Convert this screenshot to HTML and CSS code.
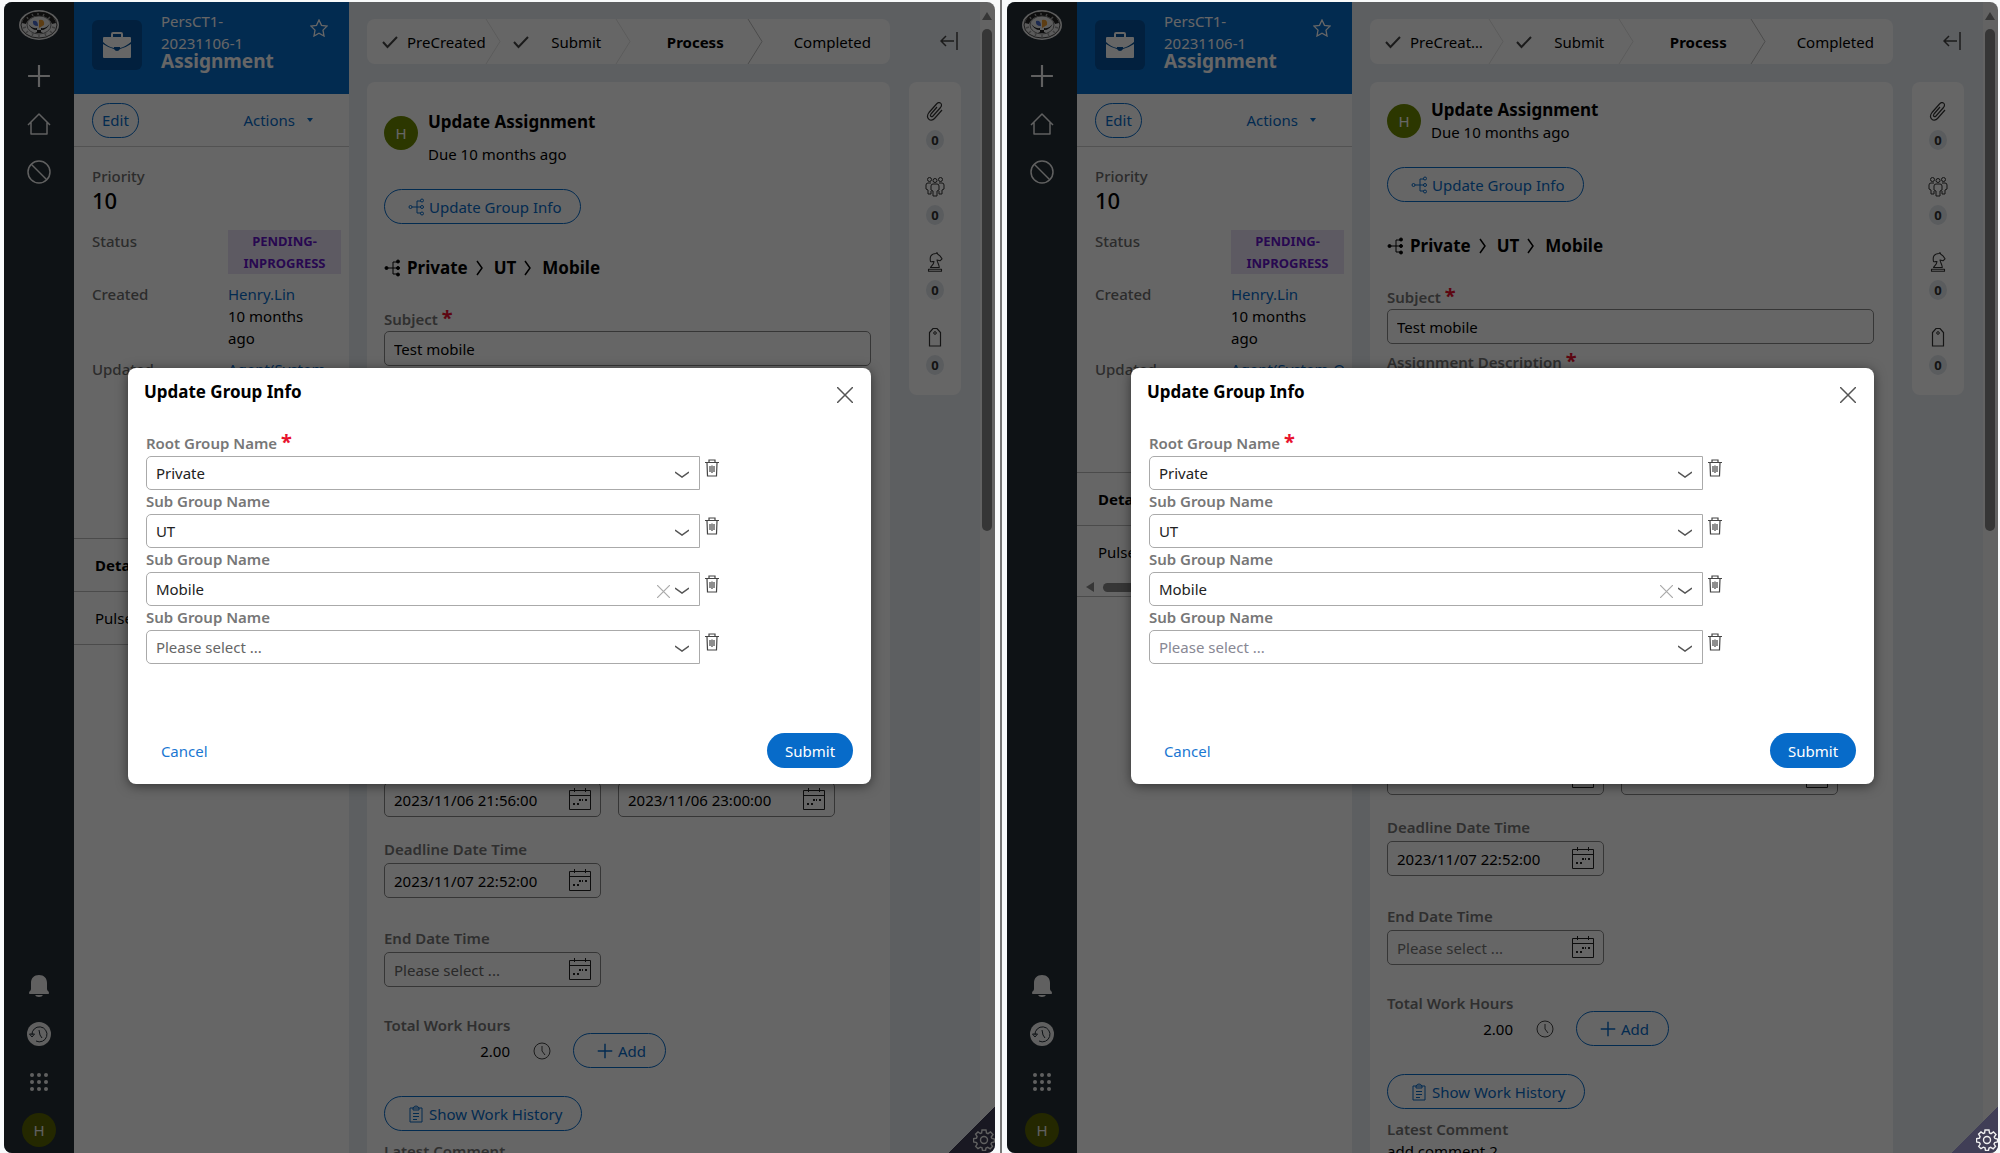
FILE: index.html
```html
<!DOCTYPE html>
<html lang="en">
<head>
    <meta charset="UTF-8">
    <title>Assignment - Update Group Info</title>
    <link rel="stylesheet" href="styles.css">
</head>
<body>
    <!-- Icon set, used by both screens -->
    <svg class="icon-set" aria-hidden="true">
        <symbol id="i-logo" viewBox="0 0 40 30">
            <ellipse cx="20" cy="15" rx="20" ry="15" fill="#e4e4e4"/>
            <ellipse cx="20" cy="15" rx="18" ry="13" fill="none" stroke="#444" stroke-width="1"/>
            <path d="M3 13C5 5 12 2 20 2s15 3 17 11l-4 1C31 9 27 6 20 6S9 9 7 14z" fill="#222"/>
            <path d="M8 7l1 2M13 4l1 2M19 3v2M25 4l-1 2M31 7l-2 2M4 18l3-1M7 23l2-2M13 26l1-2M20 27v-2M27 26l-1-2M33 23l-2-2M36 18l-3-1" stroke="#999" stroke-width="1.5"/>
            <ellipse cx="20" cy="15" rx="12" ry="9" fill="#e8e8e8" stroke="#777"/>
            <path d="M14 11q5 -1 5 5q-6 0 -5 -5z" fill="#4a69c9"/>
            <path d="M20 10q6 -1 5 5l-5 3z" fill="#e89a30"/>
            <path d="M9 13q3 6 9 5v4q-3 2-6 1h16q-3 1-6-1v-4q6 1 9-5q-3 8-11 7q-8 1-11-7z" fill="#222"/>
        </symbol>
        <symbol id="i-plus" viewBox="0 0 22 22"><path d="M11 1v20M1 11h20" stroke="currentColor" stroke-width="2" fill="none"/></symbol>
        <symbol id="i-home" viewBox="0 0 24 24"><path d="M1 13L12 2l11 11M4 10v12h16V10" stroke="currentColor" stroke-width="1.5" fill="none" stroke-linejoin="round"/></symbol>
        <symbol id="i-ban" viewBox="0 0 24 24"><circle cx="12" cy="12" r="11" stroke="currentColor" stroke-width="1.5" fill="none"/><path d="M4 4l16 16" stroke="currentColor" stroke-width="1.5"/></symbol>
        <symbol id="i-bell" viewBox="0 0 22 24"><path d="M11 1c-5 0-8 3-8 8v6c0 2-2 2-2 4 0 1 1 1 1 1h18s1 0 1-1c0-2-2-2-2-4V9c0-5-3-8-8-8zM7 21h8q-1 2-4 2t-4-2z" fill="currentColor"/></symbol>
        <symbol id="i-history" viewBox="0 0 24 24"><circle cx="12" cy="12" r="12" fill="currentColor"/><path d="M5 13a7.500 7.500 0 1 1 4 6M2.500 12l2.500 3 2.500-3zM12 8l1 5 2 3" stroke="#232d35" fill="none" stroke-width="1"/></symbol>
        <symbol id="i-grid" viewBox="0 0 18 18"><g fill="currentColor"><circle cx="2" cy="2" r="2"/><circle cx="9" cy="2" r="2"/><circle cx="16" cy="2" r="2"/><circle cx="2" cy="9" r="2"/><circle cx="9" cy="9" r="2"/><circle cx="16" cy="9" r="2"/><circle cx="2" cy="16" r="2"/><circle cx="9" cy="16" r="2"/><circle cx="16" cy="16" r="2"/></g></symbol>
        <symbol id="i-case" viewBox="0 0 28 26"><path d="M8 5V2q0-2 2-2h8q2 0 2 2v3h-2V2h-8v3z" fill="currentColor"/><path d="M1 5h26q1 0 1 1v4q-6 5-11 6v-1h-6v1Q5 15 0 10V6q0-1 1-1zM0 12q6 4 11 5 1 2 3 2t3-2q5-1 11-5v13q0 1-1 1H1q-1 0-1-1z" fill="currentColor"/></symbol>
        <symbol id="i-star" viewBox="0 0 18 18"><path d="M9 1l2.500 5.300 5.500.8-4 4 1 5.900-5-2.800L4 17l1-5.900-4-4 5.500-.8z" stroke="currentColor" fill="none" stroke-width="1.300"/></symbol>
        <symbol id="i-check" viewBox="0 0 16 14"><path d="M1 7l4.500 5L15 2" stroke="currentColor" fill="none" stroke-width="2"/></symbol>
        <symbol id="i-collapse" viewBox="0 0 18 18"><path d="M17 0v18M14 9H1M6 4L1 9l5 5" stroke="currentColor" fill="none" stroke-width="1.500"/></symbol>
        <symbol id="i-tree" viewBox="0 0 16 18"><path d="M4 9h9M13 3H9v12h4" stroke="currentColor" fill="none"/><g stroke="currentColor"><circle cx="2.500" cy="9" r="1.500"/><circle cx="14" cy="2.500" r="1.500"/><circle cx="14" cy="9" r="1.500"/><circle cx="14" cy="15.500" r="1.500"/></g></symbol>
        <symbol id="i-next" viewBox="0 0 8 16"><path d="M1 1l5 7-5 7" stroke="currentColor" fill="none" stroke-width="1.500"/></symbol>
        <symbol id="i-clip" viewBox="0 0 18 20"><path d="M11 5l-6 7c-1.500 2 .5 3.500 2 2l7.500-8.500c3-4-1.500-6.500-4-3.500L3 10.500c-4 5 1.500 10.500 5.500 6l7.500-8.500" stroke="currentColor" fill="none" stroke-width="1.200"/></symbol>
        <symbol id="i-people" viewBox="0 0 20 20"><g stroke="currentColor" fill="none"><circle cx="4.500" cy="2.500" r="2"/><circle cx="15.500" cy="2.500" r="2"/><circle cx="10" cy="3.500" r="2"/><path d="M6 6H3Q1 6 1 8v4l2 1v4h3v-3M14 6h3q2 0 2 2v4l-2 1v4h-3v-3M8 7h4q2 0 2 2v4l-2 1v5H8v-5l-2-1V9q0-2 2-2z"/></g></symbol>
        <symbol id="i-knight" viewBox="0 0 16 20"><path d="M3.500 15.500c1-1.500 3.500-3.500 3.500-6-1.500 0-2.500.5-3.500 0C2.500 5 4 1.500 9 1.500L10 .7l.8 1.500C12.500 3 14 5 15 6.800L13 8.800 10 8c.5 3 2 4 2.300 7.500zM1.500 19.300h13v-2h-13z" stroke="currentColor" fill="none" stroke-width="1.100" stroke-linejoin="round"/></symbol>
        <symbol id="i-tag" viewBox="0 0 14 20"><path d="M1.500 19V5.500L5 1.500h4l3.500 4V19z" stroke="currentColor" fill="none" stroke-width="1.200"/><circle cx="7" cy="6" r="1.300" stroke="currentColor" fill="none"/></symbol>
        <symbol id="i-calendar" viewBox="0 0 22 22"><path d="M.5 2.500h21v19H.5zM.5 7.500h21M5.500 0v4M16.500 0v4" stroke="currentColor" fill="none"/><path d="M4 15h2v2H4zM8 15h2v2H8zM10 11h2v2h-2zM13 11h1v2h-1zM16 11h2v2h-2z" fill="currentColor"/></symbol>
        <symbol id="i-clock" viewBox="0 0 18 18"><circle cx="9" cy="9" r="8" stroke="currentColor" fill="none"/><path d="M9 4v5l3 4" stroke="currentColor" fill="none"/></symbol>
        <symbol id="i-clipboard" viewBox="0 0 14 18"><path d="M1 3h12v14H1zM4 5V3q1-2 3-2t3 2v2zM4 8.500h6M4 11.500h6M4 14.500h4" stroke="currentColor" fill="none"/></symbol>
        <symbol id="i-close" viewBox="0 0 16 16"><path d="M0 0l16 16M16 0L0 16" stroke="currentColor" fill="none" stroke-width="1.500"/></symbol>
        <symbol id="i-chevron" viewBox="0 0 14 8"><path d="M0 1l7 5 7-5" stroke="currentColor" fill="none" stroke-width="1.500"/></symbol>
        <symbol id="i-trash" viewBox="0 0 14 18"><path d="M0 3.500h14M4 3V1h6v2M2 4l.5 13h9L12 4M5 7v6M7 6.500v7.500M9 7v6" stroke="currentColor" fill="none" stroke-width="1.200"/></symbol>
        <symbol id="i-gear" viewBox="0 0 22 22"><path d="M9 1h4l.5 3 1.500.6L17.500 3 20 5.500 18.200 8l.8 1.500 2.500.5v3l-2.800.6-.7 1.400 1.500 2.500-2.300 2.300-2.500-1.500-1.700.7L12.500 21.500h-3L9 18.800l-1.600-.6L5 19.700l-2.300-2.300L4.200 15l-.7-1.500-3-.6V9.700l3-.6.6-1.500L2.600 5.200 5 2.900l2.300 1.600L8.600 4z" stroke="currentColor" fill="none" stroke-width="1.400"/><circle cx="11" cy="11" r="3.500" stroke="currentColor" fill="none" stroke-width="1.400"/></symbol>
        <symbol id="i-arrow" viewBox="0 0 17 45"><path d="M1 0l14 22.500L1 45" stroke="currentColor" fill="none"/></symbol>
    </svg>

    <section class="screen">
        <nav class="sidebar">
            <svg class="logo"><use href="#i-logo"/></svg>
            <a href="#" aria-label="Create"><svg><use href="#i-plus"/></svg></a>
            <a href="#" aria-label="Home"><svg><use href="#i-home"/></svg></a>
            <a href="#" aria-label="Blocked"><svg><use href="#i-ban"/></svg></a>
            <div class="sidebar-bottom">
                <a href="#" aria-label="Notifications"><svg><use href="#i-bell"/></svg></a>
                <a href="#" aria-label="Recent"><svg><use href="#i-history"/></svg></a>
                <a href="#" aria-label="Apps"><svg class="small"><use href="#i-grid"/></svg></a>
                <a href="#" class="avatar dark">H</a>
            </div>
        </nav>

        <aside class="summary">
            <header class="case-header">
                <span class="case-icon"><svg><use href="#i-case"/></svg></span>
                <div class="case-name">
                    <span>PersCT1-20231106-1</span>
                    <h1>Assignment</h1>
                </div>
                <button class="star" aria-label="Follow"><svg><use href="#i-star"/></svg></button>
            </header>
            <div class="case-actions">
                <button class="pill">Edit</button>
                <button class="plain">Actions <span class="caret"></span></button>
            </div>
            <dl class="priority">
                <dt>Priority</dt>
                <dd>10</dd>
            </dl>
            <dl class="fields">
                <dt>Status</dt>
                <dd class="badge">PENDING-INPROGRESS</dd>
                <dt>Created</dt>
                <dd><a href="#">Henry.Lin</a><br>10 months ago</dd>
                <dt>Updated</dt>
                <dd><a href="#">Agent(System-<br>Queue-User)</a><br>10 months ago</dd>
            </dl>
            <h2 class="details">Details</h2>
            <div class="pulse">Pulse</div>
        </aside>

        <main class="content">
            <div class="stages-row">
                <ol class="stages">
                    <li><svg class="check"><use href="#i-check"/></svg><span class="label">PreCreated</span><svg class="arrow"><use href="#i-arrow"/></svg></li>
                    <li><svg class="check"><use href="#i-check"/></svg><span class="label">Submit</span><svg class="arrow"><use href="#i-arrow"/></svg></li>
                    <li class="current"><span class="label">Process</span><svg class="arrow"><use href="#i-arrow"/></svg></li>
                    <li><span class="label">Completed</span></li>
                </ol>
                <button class="collapse" aria-label="Collapse"><svg><use href="#i-collapse"/></svg></button>
            </div>
            <div class="columns">
                <form class="card">
                    <div class="task">
                        <span class="avatar">H</span>
                        <div>
                            <h2>Update Assignment</h2>
                            <p>Due 10 months ago</p>
                        </div>
                    </div>
                    <button type="button" class="pill icon-pill"><svg class="tree"><use href="#i-tree"/></svg>Update Group Info</button>
                    <div class="crumbs">
                        <svg class="tree solid"><use href="#i-tree"/></svg><b>Private</b><svg class="next"><use href="#i-next"/></svg><b>UT</b><svg class="next"><use href="#i-next"/></svg><b>Mobile</b>
                    </div>
                    <label for="subject-a" class="required">Subject</label>
                    <input type="text" id="subject-a" value="Test mobile">
                    <label for="desc-a" class="required">Assignment Description</label>
                    <textarea id="desc-a"></textarea>
                    <div class="dates">
                        <div>
                            <label for="start-a">Start Date Time</label>
                            <span class="date"><input type="text" id="start-a" value="2023/11/06 21:56:00"><svg><use href="#i-calendar"/></svg></span>
                        </div>
                        <div>
                            <label for="goal-a">Goal Date Time</label>
                            <span class="date"><input type="text" id="goal-a" value="2023/11/06 23:00:00"><svg><use href="#i-calendar"/></svg></span>
                        </div>
                        <div>
                            <label for="deadline-a">Deadline Date Time</label>
                            <span class="date"><input type="text" id="deadline-a" value="2023/11/07 22:52:00"><svg><use href="#i-calendar"/></svg></span>
                        </div>
                    </div>
                    <div class="dates end">
                        <div>
                            <label for="end-a">End Date Time</label>
                            <span class="date"><input type="text" id="end-a" placeholder="Please select ..."><svg><use href="#i-calendar"/></svg></span>
                        </div>
                    </div>
                    <p class="field-label">Total Work Hours</p>
                    <div class="hours">
                        <span class="amount">2.00</span>
                        <svg class="clock"><use href="#i-clock"/></svg>
                        <button type="button" class="pill icon-pill"><svg><use href="#i-plus"/></svg>Add</button>
                    </div>
                    <button type="button" class="pill icon-pill"><svg><use href="#i-clipboard"/></svg>Show Work History</button>
                    <p class="field-label comment">Latest Comment</p>
                    <p>add comment 2</p>
                </form>
                <ul class="utilities">
                    <li><svg><use href="#i-clip"/></svg><span>0</span></li>
                    <li><svg><use href="#i-people"/></svg><span>0</span></li>
                    <li><svg><use href="#i-knight"/></svg><span>0</span></li>
                    <li><svg><use href="#i-tag"/></svg><span>0</span></li>
                </ul>
            </div>
        </main>
        <div class="scrollbar"><span class="up"></span><span class="thumb"></span></div>

        <a href="#" class="corner" aria-label="Settings"><svg><use href="#i-gear"/></svg></a>

        <div class="overlay">
            <form class="modal" role="dialog" aria-label="Update Group Info">
                <header>
                    <h2>Update Group Info</h2>
                    <button type="button" class="close" aria-label="Close"><svg><use href="#i-close"/></svg></button>
                </header>
                <label for="root-a" class="required">Root Group Name</label>
                <div class="group">
                    <span class="picker"><select id="root-a"><option>Private</option></select><svg class="chevron"><use href="#i-chevron"/></svg></span>
                    <button type="button" class="trash" aria-label="Delete"><svg><use href="#i-trash"/></svg></button>
                </div>
                <label for="sub1-a">Sub Group Name</label>
                <div class="group">
                    <span class="picker"><select id="sub1-a"><option>UT</option></select><svg class="chevron"><use href="#i-chevron"/></svg></span>
                    <button type="button" class="trash" aria-label="Delete"><svg><use href="#i-trash"/></svg></button>
                </div>
                <label for="sub2-a">Sub Group Name</label>
                <div class="group">
                    <span class="picker"><select id="sub2-a"><option>Mobile</option></select><button type="button" class="clear" aria-label="Clear"><svg><use href="#i-close"/></svg></button><svg class="chevron"><use href="#i-chevron"/></svg></span>
                    <button type="button" class="trash" aria-label="Delete"><svg><use href="#i-trash"/></svg></button>
                </div>
                <label for="sub3-a">Sub Group Name</label>
                <div class="group">
                    <span class="picker"><select id="sub3-a" class="empty"><option>Please select ...</option></select><svg class="chevron"><use href="#i-chevron"/></svg></span>
                    <button type="button" class="trash" aria-label="Delete"><svg><use href="#i-trash"/></svg></button>
                </div>
                <footer>
                    <button type="button" class="cancel">Cancel</button>
                    <button type="submit" class="submit">Submit</button>
                </footer>
            </form>
        </div>
    </section>

    <div class="divider"></div>

    <section class="screen new">
        <nav class="sidebar">
            <svg class="logo"><use href="#i-logo"/></svg>
            <a href="#" aria-label="Create"><svg><use href="#i-plus"/></svg></a>
            <a href="#" aria-label="Home"><svg><use href="#i-home"/></svg></a>
            <a href="#" aria-label="Blocked"><svg><use href="#i-ban"/></svg></a>
            <div class="sidebar-bottom">
                <a href="#" aria-label="Notifications"><svg><use href="#i-bell"/></svg></a>
                <a href="#" aria-label="Recent"><svg><use href="#i-history"/></svg></a>
                <a href="#" aria-label="Apps"><svg class="small"><use href="#i-grid"/></svg></a>
                <a href="#" class="avatar dark">H</a>
            </div>
        </nav>

        <aside class="summary">
            <header class="case-header">
                <span class="case-icon"><svg><use href="#i-case"/></svg></span>
                <div class="case-name">
                    <span>PersCT1-20231106-1</span>
                    <h1>Assignment</h1>
                </div>
                <button class="star" aria-label="Follow"><svg><use href="#i-star"/></svg></button>
            </header>
            <div class="case-actions">
                <button class="pill">Edit</button>
                <button class="plain">Actions <span class="caret"></span></button>
            </div>
            <dl class="priority">
                <dt>Priority</dt>
                <dd>10</dd>
            </dl>
            <dl class="fields">
                <dt>Status</dt>
                <dd class="badge">PENDING-INPROGRESS</dd>
                <dt>Created</dt>
                <dd><a href="#">Henry.Lin</a><br>10 months ago</dd>
                <dt>Updated</dt>
                <dd class="nowrap"><a href="#">Agent(System-Queue-User)</a></dd>
            </dl>
            <h2 class="details">Details</h2>
            <div class="pulse">Pulse
                <div class="hscroll"><span class="left"></span><span class="hthumb"></span></div>
            </div>
        </aside>

        <main class="content">
            <div class="stages-row">
                <ol class="stages">
                    <li><svg class="check"><use href="#i-check"/></svg><span class="label">PreCreated</span><svg class="arrow"><use href="#i-arrow"/></svg></li>
                    <li><svg class="check"><use href="#i-check"/></svg><span class="label">Submit</span><svg class="arrow"><use href="#i-arrow"/></svg></li>
                    <li class="current"><span class="label">Process</span><svg class="arrow"><use href="#i-arrow"/></svg></li>
                    <li><span class="label">Completed</span></li>
                </ol>
                <button class="collapse" aria-label="Collapse"><svg><use href="#i-collapse"/></svg></button>
            </div>
            <div class="columns">
                <form class="card">
                    <div class="task">
                        <span class="avatar">H</span>
                        <div>
                            <h2>Update Assignment</h2>
                            <p>Due 10 months ago</p>
                        </div>
                    </div>
                    <button type="button" class="pill icon-pill"><svg class="tree"><use href="#i-tree"/></svg>Update Group Info</button>
                    <div class="crumbs">
                        <svg class="tree solid"><use href="#i-tree"/></svg><b>Private</b><svg class="next"><use href="#i-next"/></svg><b>UT</b><svg class="next"><use href="#i-next"/></svg><b>Mobile</b>
                    </div>
                    <label for="subject-b" class="required">Subject</label>
                    <input type="text" id="subject-b" value="Test mobile">
                    <label for="desc-b" class="required">Assignment Description</label>
                    <textarea id="desc-b"></textarea>
                    <div class="dates">
                        <div>
                            <label for="start-b">Start Date Time</label>
                            <span class="date"><input type="text" id="start-b" value="2023/11/06 21:56:00"><svg><use href="#i-calendar"/></svg></span>
                        </div>
                        <div>
                            <label for="goal-b">Goal Date Time</label>
                            <span class="date"><input type="text" id="goal-b" value="2023/11/06 23:00:00"><svg><use href="#i-calendar"/></svg></span>
                        </div>
                        <div>
                            <label for="deadline-b">Deadline Date Time</label>
                            <span class="date"><input type="text" id="deadline-b" value="2023/11/07 22:52:00"><svg><use href="#i-calendar"/></svg></span>
                        </div>
                    </div>
                    <div class="dates end">
                        <div>
                            <label for="end-b">End Date Time</label>
                            <span class="date"><input type="text" id="end-b" placeholder="Please select ..."><svg><use href="#i-calendar"/></svg></span>
                        </div>
                    </div>
                    <p class="field-label">Total Work Hours</p>
                    <div class="hours">
                        <span class="amount">2.00</span>
                        <svg class="clock"><use href="#i-clock"/></svg>
                        <button type="button" class="pill icon-pill"><svg><use href="#i-plus"/></svg>Add</button>
                    </div>
                    <button type="button" class="pill icon-pill"><svg><use href="#i-clipboard"/></svg>Show Work History</button>
                    <p class="field-label comment">Latest Comment</p>
                    <p>add comment 2</p>
                </form>
                <ul class="utilities">
                    <li><svg><use href="#i-clip"/></svg><span>0</span></li>
                    <li><svg><use href="#i-people"/></svg><span>0</span></li>
                    <li><svg><use href="#i-knight"/></svg><span>0</span></li>
                    <li><svg><use href="#i-tag"/></svg><span>0</span></li>
                </ul>
            </div>
        </main>
        <div class="scrollbar"><span class="up"></span><span class="thumb"></span></div>

        <div class="overlay">
            <form class="modal" role="dialog" aria-label="Update Group Info">
                <header>
                    <h2>Update Group Info</h2>
                    <button type="button" class="close" aria-label="Close"><svg><use href="#i-close"/></svg></button>
                </header>
                <label for="root-b" class="required">Root Group Name</label>
                <div class="group">
                    <span class="picker"><select id="root-b"><option>Private</option></select><svg class="chevron"><use href="#i-chevron"/></svg></span>
                    <button type="button" class="trash" aria-label="Delete"><svg><use href="#i-trash"/></svg></button>
                </div>
                <label for="sub1-b">Sub Group Name</label>
                <div class="group">
                    <span class="picker"><select id="sub1-b"><option>UT</option></select><svg class="chevron"><use href="#i-chevron"/></svg></span>
                    <button type="button" class="trash" aria-label="Delete"><svg><use href="#i-trash"/></svg></button>
                </div>
                <label for="sub2-b">Sub Group Name</label>
                <div class="group">
                    <span class="picker"><select id="sub2-b"><option>Mobile</option></select><button type="button" class="clear" aria-label="Clear"><svg><use href="#i-close"/></svg></button><svg class="chevron"><use href="#i-chevron"/></svg></span>
                    <button type="button" class="trash" aria-label="Delete"><svg><use href="#i-trash"/></svg></button>
                </div>
                <label for="sub3-b">Sub Group Name</label>
                <div class="group">
                    <span class="picker"><select id="sub3-b" class="empty"><option>Please select ...</option></select><svg class="chevron"><use href="#i-chevron"/></svg></span>
                    <button type="button" class="trash" aria-label="Delete"><svg><use href="#i-trash"/></svg></button>
                </div>
                <footer>
                    <button type="button" class="cancel">Cancel</button>
                    <button type="submit" class="submit">Submit</button>
                </footer>
            </form>
        </div>

        <a href="#" class="corner" aria-label="Settings"><svg><use href="#i-gear"/></svg></a>
    </section>
</body>
</html>
```
FILE: styles.css
```css
* {
    box-sizing: border-box;
}

body {
    margin: 0;
    padding: 2px 2px 0 4px;
    height: 100vh;
    display: flex;
    overflow: hidden;
    background: #f8fafb;
    font-family: "Noto Sans", "Open Sans", sans-serif;
    font-size: 15px;
    line-height: 22px;
    color: #000;
}

h1, h2, p, ul, ol, dl, dd {
    margin: 0;
    padding: 0;
}

ul, ol {
    list-style: none;
}

a {
    color: #076bc9;
    text-decoration: none;
}

button, input, select, textarea {
    font: inherit;
    color: inherit;
}

button {
    background: none;
    border: none;
    padding: 0;
    cursor: pointer;
}

svg {
    display: block;
    flex: none;
}

.icon-set {
    position: absolute;
    width: 0;
    height: 0;
}

.screen {
    position: relative;
    flex: 1;
    min-width: 0;
    display: flex;
    overflow: hidden;
    border-radius: 8px;
    background: #e9eef3;
}

.divider {
    width: 2px;
    margin: -2px 5px 0;
    background: #777;
}

/* Left navigation */
.sidebar {
    flex: none;
    width: 70px;
    padding: 8px 0 6px;
    display: flex;
    flex-direction: column;
    align-items: center;
    gap: 24px;
    background: #232d35;
}

.sidebar a {
    color: #f0f0f0;
}

.sidebar svg {
    width: 24px;
    height: 24px;
}

.sidebar .logo {
    width: 40px;
    height: 30px;
}

.sidebar .small {
    width: 18px;
}

.sidebar-bottom {
    margin-top: auto;
    display: flex;
    flex-direction: column;
    align-items: center;
    gap: 24px;
}

.avatar {
    flex: none;
    width: 34px;
    height: 34px;
    border-radius: 50%;
    display: flex;
    align-items: center;
    justify-content: center;
    background: #6f8a00;
    color: #fff;
}

.avatar.dark {
    margin-top: -5px;
    background: #5a6400;
}

/* Case summary */
.summary {
    flex: none;
    width: 275px;
    background: #fff;
    overflow: hidden;
}

.case-header {
    display: flex;
    height: 92px;
    padding: 8px 22px 0 18px;
    background: #076bc9;
    color: #fff;
}

.case-icon {
    flex: none;
    width: 50px;
    height: 50px;
    margin-top: 10px;
    border-radius: 6px;
    display: flex;
    align-items: center;
    justify-content: center;
    background: #05529b;
}

.case-icon svg {
    width: 28px;
    height: 26px;
}

.case-name {
    flex: 1;
    padding-left: 19px;
    padding-right: 36px;
}

.case-name span {
    display: block;
}

.case-name h1 {
    font-size: 19px;
    line-height: 14px;
}

.star {
    align-self: flex-start;
    margin-top: 9px;
}

.star svg {
    width: 18px;
    height: 18px;
}

.case-actions {
    display: flex;
    align-items: center;
    justify-content: space-between;
    height: 53px;
    padding: 0 36px 0 18px;
    border-bottom: 1px solid #ccc;
}

.pill {
    height: 35px;
    padding: 0 9px;
    border: 1px solid #076bc9;
    border-radius: 18px;
    color: #076bc9;
}

.plain {
    display: flex;
    align-items: center;
    gap: 12px;
    color: #076bc9;
}

.caret {
    border: 3px solid transparent;
    border-top: 4px solid #076bc9;
    border-bottom: none;
}

.priority {
    padding: 18px 18px 17px;
}

dt, label, .field-label {
    font-weight: 500;
    color: #6e6e6e;
}

label, .field-label {
    font-weight: 600;
    color: #777;
}

.priority dd {
    font-size: 22px;
    line-height: 26px;
    font-weight: 500;
}

.fields {
    display: grid;
    grid-template-columns: 136px minmax(0, 1fr);
    row-gap: 9px;
    padding: 0 8px 92px 18px;
}

.fields dd {
    padding-right: 30px;
}

.fields a {
    white-space: nowrap;
}

.fields .badge {
    padding: 0;
    background: #e9e0f5;
    color: #6414c8;
    font-size: 13px;
    font-weight: 700;
    text-align: center;
}

.fields .nowrap {
    padding: 0;
    overflow: hidden;
}

.details, .pulse {
    padding: 15px 21px;
    border-top: 1px solid #bbb;
    font-size: 15px;
}

.pulse {
    border-bottom: 1px solid #bbb;
}

.hscroll {
    display: flex;
    align-items: center;
    gap: 9px;
    height: 14px;
    margin: 17px -12px -13px;
}

.left {
    border: 5px solid transparent;
    border-right: 8px solid #888;
    border-left: none;
}

.hthumb {
    flex: 1;
    height: 9px;
    border-radius: 5px;
    background: #888;
}

/* Main column */
.content {
    flex: 1;
    min-width: 0;
    padding: 17px 19px 0 18px;
}

.stages-row, .columns {
    display: flex;
    align-items: flex-start;
    justify-content: space-between;
    gap: 19px;
}

.stages {
    flex: 1;
    min-width: 0;
    display: flex;
    height: 45px;
    border-radius: 8px;
    overflow: hidden;
    background: #fff;
}

.stages li {
    flex: 1;
    min-width: 0;
    display: flex;
    align-items: center;
    padding-left: 15px;
}

.stages .check {
    width: 16px;
    height: 14px;
    margin-right: 9px;
    color: #444;
}

.stages .label {
    flex: 1;
    min-width: 0;
    overflow: hidden;
    white-space: nowrap;
    text-align: center;
}

.new .stages .label {
    text-overflow: ellipsis;
}

.stages .arrow {
    width: 17px;
    height: 45px;
    margin-right: -4px;
    color: #e4e4e4;
}

.stages .current {
    padding-left: 16px;
    font-weight: 700;
}

.stages .current .arrow {
    color: #bbb;
}

.collapse {
    width: 52px;
    height: 44px;
    padding-left: 31px;
    color: #444;
}

.collapse svg {
    width: 18px;
    height: 18px;
}

.columns {
    margin-top: 18px;
}

.card {
    flex: 1;
    min-width: 0;
    height: 1200px;
    padding: 29px 19px 0 17px;
    border-radius: 8px;
    background: #fff;
}

.new .card {
    padding-top: 17px;
}

.task {
    display: flex;
    align-items: center;
    gap: 10px;
    margin-bottom: 24px;
}

.task .avatar {
    margin-bottom: 11px;
}

.new .task .avatar {
    margin-bottom: 1px;
}

.task h2 {
    font-size: 17px;
    line-height: 22px;
    margin-bottom: 10px;
}

.new .task h2 {
    margin-bottom: 0;
}

.icon-pill {
    display: flex;
    align-items: center;
    gap: 5px;
    padding: 0 19px 0 23px;
}

.icon-pill svg {
    width: 16px;
    height: 18px;
}

.tree {
    width: 16px;
    height: 18px;
    fill: none;
}

.tree.solid {
    fill: currentColor;
}

.crumbs {
    display: flex;
    align-items: center;
    margin: 33px 0 29px;
    font-size: 17px;
}

.crumbs b {
    margin-left: 7px;
}

.next {
    width: 8px;
    height: 16px;
    margin: 0 3px 0 8px;
}

label {
    display: block;
    height: 22px;
    margin-bottom: 1px;
}

.required::after {
    content: "*";
    margin-left: 4px;
    color: #e8112d;
    font-size: 20px;
    font-weight: 700;
    line-height: 10px;
}

.card input, .card textarea {
    display: block;
    width: 100%;
    height: 35px;
    padding: 0 9px;
    border: 1px solid #888;
    border-radius: 5px;
    background: #fff;
}

.card .required + input {
    margin-bottom: 7px;
}

.card textarea {
    height: 352px;
    margin-bottom: 9px;
    resize: none;
}

.dates {
    display: grid;
    grid-template-columns: 217px 217px;
    column-gap: 17px;
    row-gap: 21px;
}

.dates.end {
    margin: 29px 0 27px;
}

.dates label {
    margin-bottom: 3px;
}

.date {
    position: relative;
    display: block;
}

.date svg {
    position: absolute;
    right: 10px;
    top: 6px;
    width: 22px;
    height: 22px;
    color: #222;
}

input::placeholder {
    color: #666;
    opacity: 1;
}

.new input::placeholder {
    color: #777;
}

.hours {
    display: flex;
    align-items: center;
    margin: -3px 0 28px;
}

.amount {
    width: 126px;
    text-align: right;
}

.clock {
    width: 18px;
    height: 18px;
    margin: 0 22px 0 23px;
    color: #444;
}

.comment {
    margin-top: 9px;
}

/* Utilities column */
.utilities {
    flex: none;
    width: 52px;
    padding: 20px 0 7px;
    display: flex;
    flex-direction: column;
    gap: 14px;
    border-radius: 8px;
    background: #fff;
    color: #333;
}

.utilities li {
    display: flex;
    flex-direction: column;
    align-items: center;
    height: 61px;
    gap: 8px;
}

.utilities svg {
    width: 20px;
    height: 20px;
}

.utilities span {
    width: 18px;
    height: 20px;
    border-radius: 50%;
    background: #e0e6ec;
    font-size: 13px;
    font-weight: 700;
    line-height: 20px;
    text-align: center;
}

.scrollbar {
    flex: none;
    width: 15px;
    padding: 10px 3px 0 2px;
    display: flex;
    flex-direction: column;
    gap: 9px;
    background: #f8f8f8;
}

.up {
    border: 5px solid transparent;
    border-bottom: 8px solid #888;
    border-top: none;
}

.thumb {
    height: 502px;
    border-radius: 5px;
    background: #888;
}

.corner {
    position: absolute;
    right: 0;
    bottom: 0;
    width: 47px;
    height: 47px;
    padding: 23px 0 0 25px;
    background: linear-gradient(135deg, transparent 50%, #403e56 50%);
    color: #f0f0f0;
}

.corner svg {
    width: 22px;
    height: 22px;
}

/* Modal */
.overlay {
    position: absolute;
    inset: 0;
    display: flex;
    align-items: center;
    justify-content: center;
    padding-bottom: 3px;
    background: rgba(0, 0, 0, 0.6);
}

.modal {
    width: 75%;
    padding: 13px 18px 16px;
    border-radius: 8px;
    background: #fff;
    box-shadow: 0 2px 12px rgba(0, 0, 0, 0.5);
}

.modal header {
    display: flex;
    justify-content: space-between;
    align-items: flex-start;
    height: 22px;
    margin: 0 0 29px -2px;
}

.modal h2 {
    font-size: 17px;
    line-height: 22px;
}

.modal label {
    margin-bottom: 2px;
}

.close {
    margin-top: 6px;
    color: #555;
}

.close svg {
    width: 16px;
    height: 16px;
}

.group {
    display: flex;
    align-items: flex-start;
    gap: 5px;
}

.picker {
    position: relative;
    width: 554px;
}

.picker select {
    display: block;
    width: 100%;
    height: 34px;
    padding: 0 9px;
    appearance: none;
    border: 1px solid #aaa;
    border-radius: 5px 0 0 5px;
    background: #fff;
    color: #222;
}

.picker .empty {
    color: #666;
}

.new .picker .empty {
    color: #888894;
}

.chevron {
    position: absolute;
    right: 11px;
    top: 15px;
    width: 14px;
    height: 8px;
    color: #555;
}

.clear {
    position: absolute;
    right: 30px;
    top: 13px;
    color: #aaa;
}

.clear svg {
    width: 13px;
    height: 13px;
}

.trash {
    margin-top: 3px;
    color: #444;
}

.trash svg {
    width: 14px;
    height: 18px;
}

.modal footer {
    display: flex;
    justify-content: space-between;
    margin-top: 69px;
}

.cancel {
    padding: 0 15px;
    color: #1a77d2;
}

.submit {
    height: 35px;
    padding: 0 18px;
    border-radius: 18px;
    background: #076bc9;
    color: #fff;
}
```
